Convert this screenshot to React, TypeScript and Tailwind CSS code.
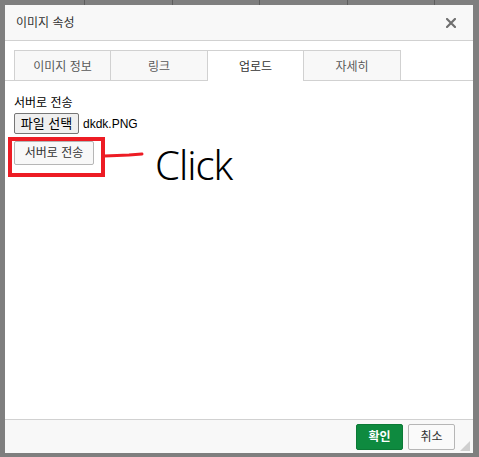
import React, { useState } from 'react';

const KR = { fontFamily: '"Liberation Sans", "Noto Sans CJK KR", sans-serif' };

const tabs = [
  { label: '이미지 정보', w: 'w-[97px]' },
  { label: '링크', w: 'w-[97px]' },
  { label: '업로드', w: 'w-[96px]' },
  { label: '자세히', w: 'w-[97px]' }
];

// only the bottom few pixels of the editor toolbar peek out above the dialog
const Toolbar: React.FC = () => (
  <div className="absolute left-0 top-0 w-full h-[5px] overflow-hidden">
    <div className="flex h-[5px] items-end">
      {[85, 88, 87, 88, 87].map((w, i) => (
        <div key={i} className="h-[5px] border-r border-[#5e5e5e]" style={{ width: w }} />
      ))}
    </div>
  </div>
);

const App: React.FC = () => {
  const [active, setActive] = useState(2);

  return (
    <div className="relative w-[479px] h-[457px] bg-[#7f7f7f] pt-[5px] pl-[5px] overflow-hidden" style={KR}>
      <Toolbar />

      <div className="w-[468px] h-[448px] bg-white flex flex-col">
        {/* title bar */}
        <div className="h-[36px] shrink-0 bg-[#f8f8f8] border-b border-[#d1d1d1] flex items-center justify-between pl-[11px] pr-[17px]">
          <span className="text-[12px] text-[#333]">이미지 속성</span>
          <svg width="10" height="10" viewBox="0 0 10 10">
            <path d="M1 1 L9 9 M9 1 L1 9" stroke="#707070" strokeWidth="2.2" strokeLinecap="square" />
          </svg>
        </div>

        {/* body */}
        <div className="flex-1 flex flex-col">
          <div className="pt-[9px] flex items-end border-b border-[#d1d1d1] pl-[9px]">
            {tabs.map((t, i) => (
              <button
                key={t.label}
                onClick={() => setActive(i)}
                className={`${t.w} text-[12px] pt-[2px] border-t border-r border-[#d1d1d1] ${i === 0 ? 'border-l' : ''} ${
                  active === i
                    ? 'h-[31px] -mb-px bg-white text-[#333]'
                    : 'h-[30px] bg-[#f8f8f8] text-[#595959]'
                }`}
              >
                {t.label}
              </button>
            ))}
          </div>

          <div className="pl-[9px] pt-[15px] flex flex-col">
            <div className="text-[12px] text-black leading-[15px]">서버로 전송</div>
            <div className="flex items-center gap-[4px] mt-[2px]">
              <button className="h-[21px] w-[65px] text-[13px] bg-[#efefef] border border-[#767676] rounded-[2px] text-black leading-none">
                파일 선택
              </button>
              <span className="text-[12px] text-black">dkdk.PNG</span>
            </div>
            <button className="mt-[7px] h-[24px] w-[80px] text-[12px] bg-[#f8f8f8] border border-[#b6b6b6] rounded-[2px] text-[#333]">
              서버로 전송
            </button>
          </div>
        </div>

        {/* footer */}
        <div className="h-[34px] shrink-0 bg-[#f8f8f8] border-t border-[#d1d1d1] relative flex items-start justify-end gap-[5px] pt-[4px] pr-[18px]">
          <button className="h-[26px] w-[47px] bg-[#0e8a3f] border border-[#0b7a36] rounded-[2px] text-white text-[12px] font-bold">
            확인
          </button>
          <button className="h-[26px] w-[47px] bg-[#fafafa] border border-[#b6b6b6] rounded-[2px] text-[#333] text-[12px]">
            취소
          </button>
          <svg className="absolute right-[3px] bottom-[2px]" width="10" height="10" viewBox="0 0 10 10">
            <path d="M10 0 L10 10 L0 10 Z" fill="#cfcfcf" />
          </svg>
        </div>
      </div>

      {/* annotation drawn on the screenshot */}
      <div className="absolute left-[8px] top-[137px] w-[97px] h-[40px] border-[4px] border-[#ed1c24]" />
      <svg className="absolute left-[103px] top-[150px]" width="42" height="10" viewBox="0 0 42 10">
        <path d="M1 6 L14 5.5 L26 5 L39 4" stroke="#ed1c24" strokeWidth="3" fill="none" strokeLinecap="round" />
      </svg>
      <div
        className="absolute left-[155px] top-[140px] text-[40px] font-light text-black leading-[50px] tracking-[-1px]"
        style={{ fontFamily: '"Noto Sans", sans-serif' }}
      >
        Click
      </div>
    </div>
  );
};

export default App;
